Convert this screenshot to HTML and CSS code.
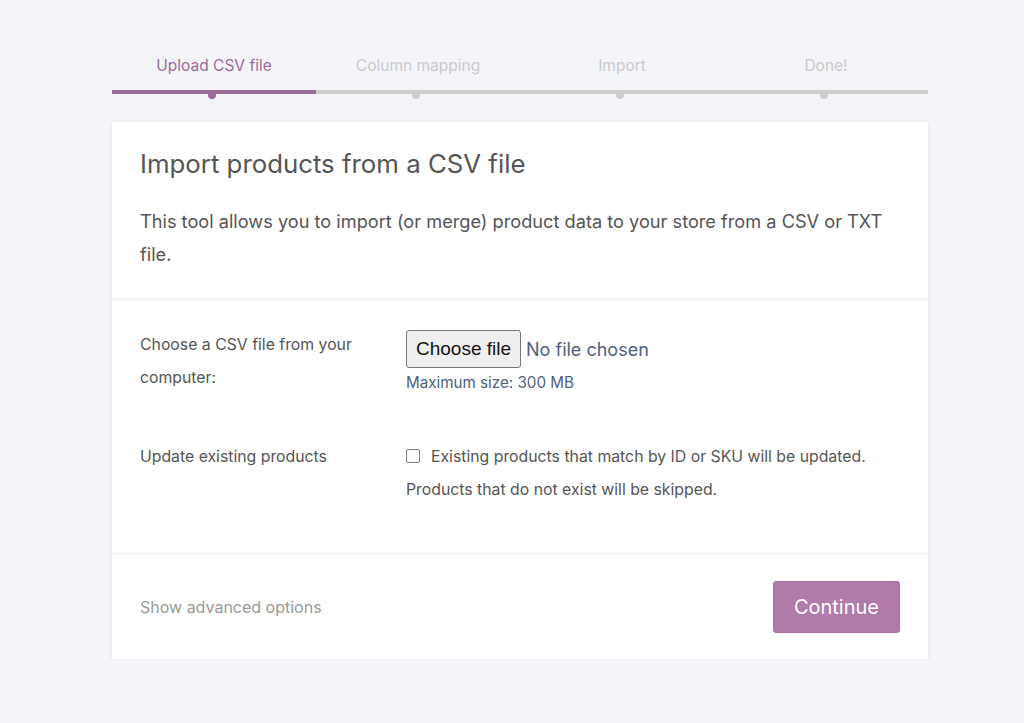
FILE: index.html
```html
<!DOCTYPE html>
<html lang="en">
<head>
<meta charset="utf-8">
<title>Import products</title>
<link rel="stylesheet" href="styles.css">
</head>
<body>
<div class="wrap">
  <ol class="steps">
    <li class="step active">Upload CSV file</li>
    <li class="step">Column mapping</li>
    <li class="step">Import</li>
    <li class="step">Done!</li>
  </ol>
  <div class="card">
    <header class="card-head">
      <h2 class="title">Import products from a CSV file</h2>
      <p class="intro">This tool allows you to import (or merge) product data to your store from a CSV or TXT file.</p>
    </header>
    <section class="form">
      <div class="label">Choose a CSV file from your computer:</div>
      <div class="field">
        <div class="file-row"><span class="file-btn">Choose file</span><span class="file-none">No file chosen</span></div>
        <div class="max">Maximum size: 300 MB</div>
      </div>
      <div class="label">Update existing products</div>
      <div class="field check-field">
        <span class="box"></span>Existing products that match by ID or SKU will be updated. Products that do not exist will be skipped.
      </div>
    </section>
    <footer class="card-foot">
      <span class="adv">Show advanced options</span>
      <span class="btn">Continue</span>
    </footer>
  </div>
</div>
</body>
</html>
```

FILE: styles.css
```css
html, body { margin: 0; padding: 0; }
body {
  background: #f4f5f9;
  font-family: Inter, "Noto Sans", sans-serif;
  color: #555;
}
.wrap {
  width: 816px;
  margin-left: 112px;
  padding-top: 55px;
}
.steps {
  list-style: none;
  margin: 0;
  padding: 0;
  display: flex;
}
.step {
  flex: 1;
  text-align: center;
  font-size: 15.5px;
  line-height: 22px;
  color: #c9c9cc;
  padding-bottom: 13px;
  border-bottom: 4px solid #cdcdcd;
  position: relative;
}
.step::after {
  content: "";
  position: absolute;
  left: 50%;
  bottom: -9px;
  width: 8px;
  height: 8px;
  margin-left: -6px;
  border-radius: 50%;
  background: #cdcdcd;
}
.step.active { color: #9d6b97; border-bottom-color: #9d6b97; }
.step.active::after { background: #9d6b97; }

.card {
  margin-top: 28px;
  background: #fff;
  box-shadow: 0 1px 3px rgba(0,0,0,0.10);
}
.card-head {
  padding: 24px 28px 28px;
  border-bottom: 1px solid #ececef;
}
.title {
  margin: 0;
  font-size: 25.8px;
  font-weight: 400;
  line-height: 36px;
  color: #555;
}
.intro {
  margin: 23px 0 0;
  font-size: 18.2px;
  line-height: 33px;
  color: #555;
}
.form {
  display: grid;
  grid-template-columns: 240px 1fr;
  column-gap: 26px;
  row-gap: 46px;
  padding: 28px 28px 47px;
  border-bottom: 1px solid #ececef;
  font-size: 15.8px;
  line-height: 33px;
}
.label { color: #555; }
.file-row { display: flex; align-items: center; padding-top: 2px; }
.file-btn {
  font-family: "Liberation Sans", Arial, sans-serif;
  font-size: 19px;
  line-height: 20px;
  color: #111;
  background: #efefef;
  border: 1px solid #767676;
  border-radius: 3px;
  padding: 8px 9px;
}
.file-none {
  font-size: 18px;
  color: #51607f;
  margin-left: 5px;
}
.max {
  font-size: 15.2px;
  line-height: 18px;
  color: #51607f;
  margin-top: 6px;
}
.check-field { color: #555; }
.box {
  display: inline-block;
  width: 12px;
  height: 12px;
  border: 1px solid #767676;
  border-radius: 2px;
  margin-right: 11px;
  vertical-align: -1px;
}
.card-foot {
  display: flex;
  justify-content: space-between;
  align-items: center;
  padding: 27px 28px 26px;
}
.adv {
  font-size: 16px;
  color: #999;
}
.btn {
  background: #b07aa9;
  color: #fff;
  font-size: 20px;
  line-height: 50px;
  padding: 0 20px;
  border: 1px solid #a86fa1;
  border-radius: 3px;
}
```
